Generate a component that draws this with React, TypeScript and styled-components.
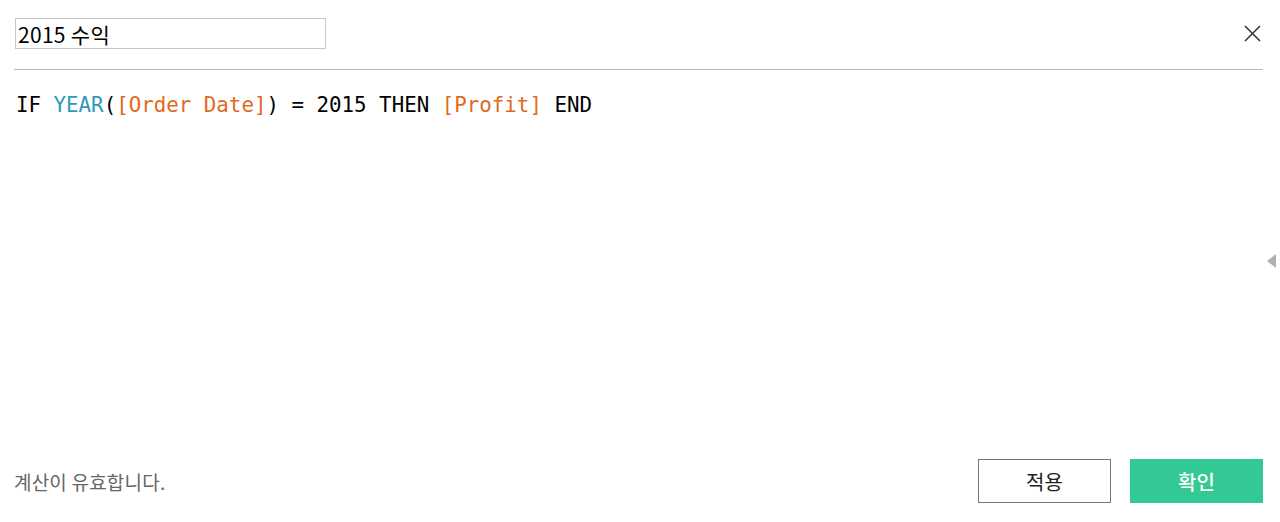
import styled, { createGlobalStyle } from "styled-components"

const GlobalStyle = createGlobalStyle`
    html, body {
        margin: 0;
        padding: 0;
        background: #ffffff;
    }
    #root {
        height: 522px;
    }
`

const colors = {
    text: "#1a1a1a",
    muted: "#666666",
    rule: "#b8b8b8",
    field: "#c6c6c6",
    teal: "#2f9ab8",
    orange: "#e06a22",
    green: "#33c994",
}

const kr = `"Noto Sans CJK KR", "Noto Sans", sans-serif`

const Dialog = styled.div`
    position: relative;
    height: 522px;
    display: flex;
    flex-direction: column;
    font-family: ${kr};
    color: ${colors.text};
    overflow: hidden;
`

const Header = styled.header`
    display: flex;
    align-items: center;
    justify-content: space-between;
    padding: 18px 18px 0 15px;
    height: 31px;
`

const NameField = styled.input`
    box-sizing: border-box;
    width: 311px;
    height: 31px;
    border: 1px solid ${colors.field};
    padding: 0 2px;
    font-family: ${kr};
    font-size: 21px;
    letter-spacing: 0.3px;
    color: #000;
    outline: none;
`

const CloseButton = styled.button`
    width: 20px;
    height: 20px;
    padding: 0;
    border: none;
    background: transparent;
    display: flex;
    align-items: center;
    justify-content: center;
    cursor: pointer;
`

const Divider = styled.hr`
    margin: 20px 17px 0 14px;
    border: none;
    border-top: 1px solid ${colors.rule};
`

const Editor = styled.div`
    flex: 1;
    padding: 20px 16px 0;
    font-family: "DejaVu Sans Mono", "Liberation Mono", monospace;
    font-size: 20.8px;
    line-height: 30px;
    white-space: pre;
    color: #000;
`

const Token = styled.span<{ $kind?: "fn" | "field" }>`
    color: ${(p) => (p.$kind === "fn" ? colors.teal : p.$kind === "field" ? colors.orange : "#000")};
`

const Footer = styled.footer`
    display: flex;
    align-items: center;
    justify-content: space-between;
    padding: 0 17px 19px 14px;
`

const Status = styled.span`
    font-size: 19px;
    letter-spacing: 0.2px;
    color: ${colors.muted};
`

const Actions = styled.div`
    display: flex;
    gap: 19px;
`

const Button = styled.button<{ $primary?: boolean }>`
    box-sizing: border-box;
    width: 133px;
    height: 44px;
    font-family: ${kr};
    font-size: 20px;
    font-weight: ${(p) => (p.$primary ? 500 : 400)};
    color: ${(p) => (p.$primary ? "#ffffff" : "#222222")};
    background: ${(p) => (p.$primary ? colors.green : "#ffffff")};
    border: 1px solid ${(p) => (p.$primary ? colors.green : "#777777")};
    cursor: pointer;
`

const PanelToggle = styled.div`
    position: absolute;
    right: 4px;
    top: 254px;
    width: 0;
    height: 0;
    border-top: 7px solid transparent;
    border-bottom: 7px solid transparent;
    border-right: 9px solid #b0b0b0;
`

const App = () => {
    return (
        <Dialog>
            <GlobalStyle />
            <Header>
                <NameField defaultValue="2015 수익" />
                <CloseButton aria-label="닫기">
                    <svg width="17" height="17" viewBox="0 0 17 17">
                        <path d="M1 1 L16 16 M16 1 L1 16" stroke="#333" strokeWidth="1.5" />
                    </svg>
                </CloseButton>
            </Header>
            <Divider />
            <Editor>
                IF <Token $kind="fn">YEAR</Token>(<Token $kind="field">[Order Date]</Token>) = 2015 THEN{" "}
                <Token $kind="field">[Profit]</Token> END
            </Editor>
            <Footer>
                <Status>계산이 유효합니다.</Status>
                <Actions>
                    <Button>적용</Button>
                    <Button $primary>확인</Button>
                </Actions>
            </Footer>
            <PanelToggle />
        </Dialog>
    )
}

export default App
